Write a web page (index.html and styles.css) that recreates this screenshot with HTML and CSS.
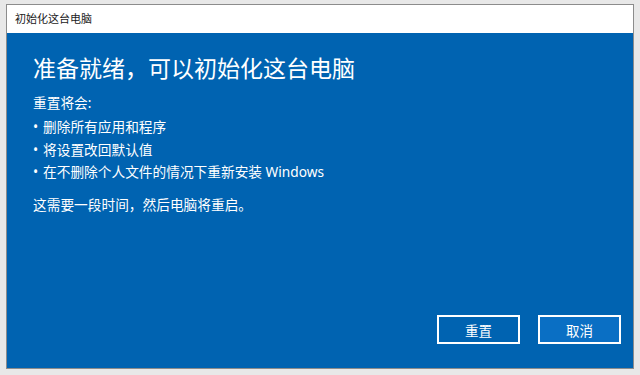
FILE: index.html
```html
<!DOCTYPE html>
<html lang="zh-CN">
<head>
<meta charset="utf-8">
<title>初始化这台电脑</title>
<link rel="stylesheet" href="styles.css">
</head>
<body>
<div class="desktop">
  <div class="dialog">
    <div class="titlebar">初始化这台电脑</div>
    <div class="content">
      <h1 class="heading">准备就绪，可以初始化这台电脑</h1>
      <p class="line">重置将会:</p>
      <ul class="list">
        <li>删除所有应用和程序</li>
        <li>将设置改回默认值</li>
        <li>在不删除个人文件的情况下重新安装 Windows</li>
      </ul>
      <p class="line note">这需要一段时间，然后电脑将重启。</p>
      <div class="actions">
        <button class="btn">重置</button>
        <button class="btn btn-focus">取消</button>
      </div>
    </div>
  </div>
</div>
</body>
</html>
```
FILE: styles.css
```css
html, body {
  margin: 0;
  padding: 0;
}
body {
  width: 640px;
  height: 375px;
  overflow: hidden;
  background: #e8e8e8;
  font-family: "Noto Sans", "Noto Sans CJK SC", sans-serif;
}
.desktop {
  padding: 4px 0 0 6px;
}
.dialog {
  width: 626px;
  height: 363px;
  border: 1px solid #8c8c8c;
  display: flex;
  flex-direction: column;
  background: #0063b1;
}
.titlebar {
  height: 28px;
  background: #ffffff;
  color: #1a1a1a;
  font-size: 11px;
  line-height: 28px;
  padding-left: 8px;
  flex: none;
}
.content {
  flex: 1;
  display: flex;
  flex-direction: column;
  padding: 20px 12px 24px 26px;
  color: #ffffff;
}
.heading {
  margin: 0 0 8px 0;
  font-size: 23px;
  font-weight: normal;
  line-height: 30px;
}
.line {
  margin: 0;
  font-size: 13.7px;
  line-height: 23px;
}
.list {
  list-style: none;
  margin: 2px 0 0 0;
  padding: 0;
  font-size: 13.7px;
  line-height: 22.6px;
}
.list li::before {
  content: "•";
  display: inline-block;
  width: 10px;
}
.note {
  margin-top: 9px;
}
.actions {
  margin-top: auto;
  display: flex;
  justify-content: flex-end;
  gap: 18px;
}
.btn {
  width: 83px;
  height: 29px;
  border: 2px solid #ffffff;
  background: #0063b1;
  color: #ffffff;
  font-family: "Noto Sans CJK SC", sans-serif;
  font-size: 13.5px;
  padding: 0;
}
.btn-focus {
  background: #0a6fc4;
}
```
